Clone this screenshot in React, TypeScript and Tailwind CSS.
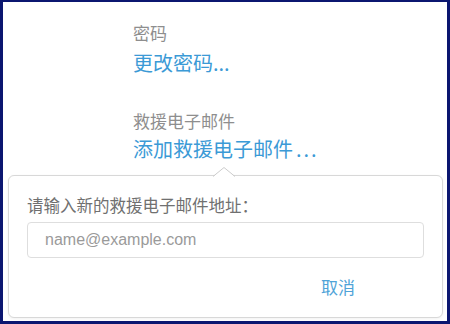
export default function App() {
  const cjk = { fontFamily: '"Noto Sans CJK SC", "Liberation Sans", sans-serif' };

  return (
    <div
      className="w-[450px] h-[324px] bg-white border-[#0b1670] border-t-2 border-l-[3px] border-r-[3px] border-b-[3px] flex flex-col overflow-hidden"
      style={cjk}
    >
      <div className="pl-[130px] pt-[19px] flex flex-col">
        <div className="text-[17px] leading-[24px] text-[#8e8e8e]">密码</div>
        <div className="mt-[4px] text-[20px] leading-[28px] text-[#3b9ad6]">更改密码...</div>
        <div className="mt-[32px] text-[17px] leading-[24px] text-[#8e8e8e]">救援电子邮件</div>
        <div className="mt-[2px] text-[20px] leading-[28px] text-[#3b9ad6]">
          添加救援电子邮件<span className="ml-[3px] tracking-[2px]">...</span>
        </div>
      </div>

      <div className="relative mt-[12px] ml-[5px] mr-[4px] h-[143px] bg-white border border-[#d8d8d8] rounded-[6px] shadow-[0_1px_3px_rgba(0,0,0,0.06)] px-[18px] pt-[17px] flex flex-col">
        <svg className="absolute -top-[9px] left-[204px]" width="22" height="10" viewBox="0 0 22 10">
          <polygon points="0,10 11,0.5 22,10" fill="#ffffff" />
          <polyline points="0,9.5 11,0.5 22,9.5" fill="none" stroke="#cccccc" strokeWidth="1" />
        </svg>
        <div className="text-[16.5px] leading-[24px] text-[#707070]">请输入新的救援电子邮件地址：</div>
        <div className="mt-[5px] h-[36px] border border-[#dedede] rounded-[4px] flex items-center pl-[17px]">
          <input
            className="w-full outline-none bg-transparent text-[16px] text-[#555] placeholder:text-[#9a9a9a]"
            style={{ fontFamily: '"Liberation Sans", sans-serif' }}
            placeholder="name@example.com"
          />
        </div>
        <div className="mt-[17px] flex justify-end pr-[69px]">
          <button className="text-[17px] leading-[24px] text-[#4fa3d8]">取消</button>
        </div>
      </div>
    </div>
  );
}
